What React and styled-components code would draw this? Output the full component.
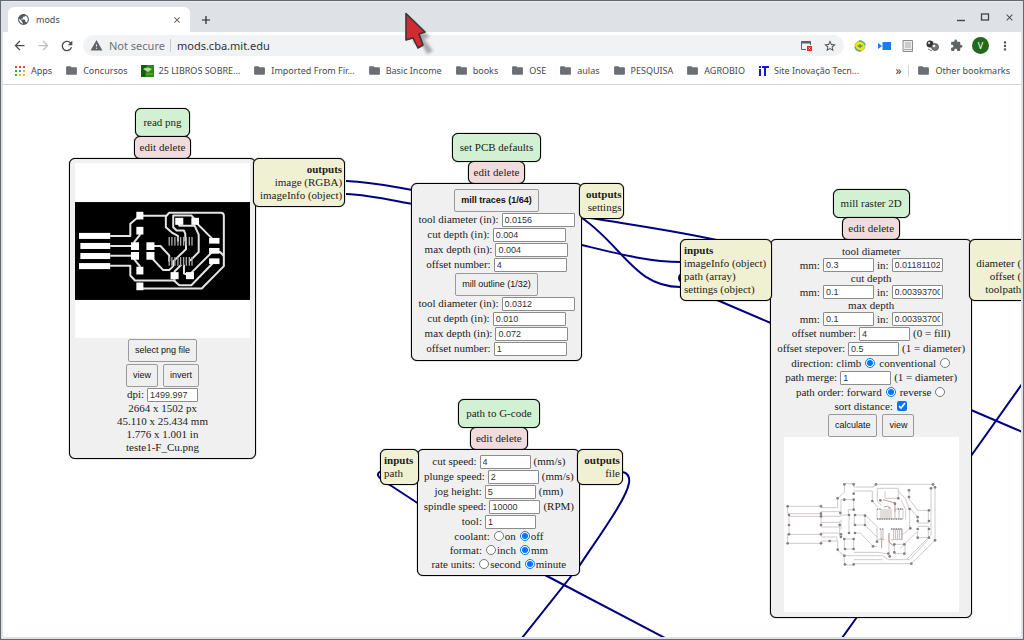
import React, { useId } from "react";
import styled, { createGlobalStyle } from "styled-components";
import {
  MdArrowBack,
  MdArrowForward,
  MdRefresh,
  MdWarning,
  MdFolder,
  MdStarBorder,
  MdExtension,
  MdMoreVert,
  MdClose,
  MdAdd,
  MdPublic,
} from "react-icons/md";

const GlobalStyle = createGlobalStyle`
  *, *::before, *::after { box-sizing: border-box; }
  body { margin: 0; background: #fff; }
  button, input { font: inherit; color: inherit; margin: 0; }
`;

const uiFont = `"Noto Sans", sans-serif`;
const serif = `"Liberation Serif", "Times New Roman", serif`;
const sans = `"Liberation Sans", Arial, sans-serif`;

/* ---------- browser window ---------- */

const Frame = styled.div`
  min-height: 100vh;
  display: flex;
  flex-direction: column;
  border: 1px solid #66686e;
  padding: 0 2px 2px;
  background: #dee1e6;
  font-family: ${uiFont};
  color: #3c4043;
`;

const TabStrip = styled.div`
  display: flex;
  align-items: stretch;
  height: 31px;
  padding: 0 0 0 5px;
  border-top: 1px solid #e9ebee;
`;

const Tab = styled.div`
  display: flex;
  align-items: center;
  gap: 6px;
  width: 182px;
  margin-top: 5px;
  padding: 0 7px 0 9px;
  border-radius: 6px 6px 0 0;
  background: #fff;
  font-size: 9px;
  color: #45494d;
`;

const TabTitle = styled.span`
  flex: 1;
`;

const IconButton = styled.button`
  display: inline-flex;
  align-items: center;
  justify-content: center;
  flex: none;
  width: ${(p) => p.$w || 24}px;
  height: 20px;
  padding: 0;
  border: 0;
  background: none;
  color: ${(p) => p.$color || "#4a4d51"};
  svg { display: block; }
`;

const NewTab = styled.div`
  display: flex;
  align-items: center;
  padding-top: 5px;
  margin-left: 4px;
`;

const WindowControls = styled.div`
  display: flex;
  align-items: center;
  margin-left: auto;
`;

const Toolbar = styled.div`
  display: flex;
  align-items: center;
  height: 27px;
  padding: 0 4px 0 4px;
  background: #fff;
`;

const AddressBar = styled.form`
  display: flex;
  align-items: center;
  flex: 1;
  height: 21px;
  margin: 0 4px;
  padding: 0 2px 0 7px;
  border-radius: 11px;
  background: #f1f2f3;
  font-size: 11px;
`;

const SecurityNote = styled.span`
  display: flex;
  align-items: center;
  gap: 6px;
  padding-right: 5px;
  border-right: 1px solid #c8cacd;
  line-height: 13px;
  color: #6d7175;
`;

const UrlInput = styled.input`
  flex: 1;
  min-width: 0;
  padding: 0 0 0 6px;
  border: 0;
  outline: 0;
  background: none;
  color: #303337;
`;

const Avatar = styled.button`
  flex: none;
  width: 17px;
  height: 17px;
  margin: 0 4px;
  padding: 0;
  border: 0;
  border-radius: 50%;
  background: #22691c;
  color: #fff;
  font-size: 9px;
  line-height: 17px;
`;

const BookmarkBar = styled.nav`
  display: flex;
  align-items: center;
  gap: 13px;
  height: 26px;
  padding: 0 11px 2px 11px;
  border-bottom: 1px solid #d3d5d8;
  background: #fff;
  font-size: 9px;
  white-space: nowrap;
`;

const Bookmark = styled.a`
  display: flex;
  align-items: center;
  gap: 5px;
  color: #45494d;
  text-decoration: none;
  svg { flex: none; }
`;

const BookmarkOverflow = styled.div`
  display: flex;
  align-items: center;
  gap: 4px;
  margin-left: auto;
`;

const MoreButton = styled.button`
  padding: 0 3px 0 0;
  border: 0;
  background: none;
  font-size: 12px;
  line-height: 14px;
`;

const Divider = styled.span`
  width: 1px;
  height: 12px;
  margin-right: 4px;
  background: #d3d5d8;
`;

/* ---------- node canvas ---------- */

const Canvas = styled.main`
  position: relative;
  flex: 1;
  overflow: hidden;
  background: #fff;
  font-family: ${serif};
  font-size: 11px;
  line-height: 13px;
  color: #1c1c1c;
`;

const Wires = styled.svg`
  position: absolute;
  inset: 0;
  width: 100%;
  height: 100%;
  fill: none;
  stroke: #000080;
  stroke-width: 2;
`;

const NodeBox = styled.section`
  position: absolute;
  left: ${(p) => p.$x}px;
  top: ${(p) => p.$y}px;
  display: grid;
  grid-template-columns: auto ${(p) => p.$width}px auto;
  justify-items: center;
  align-items: start;
`;

const Outlined = styled.div`
  border: 1px solid #000;
  box-shadow: 0 0 1px #000;
  border-radius: 6px;
  white-space: nowrap;
`;

const NodeTitle = styled(Outlined).attrs({ as: "h2" })`
  grid-column: 2;
  margin: 0;
  padding: 7px;
  background: #d2f0d2;
  font-size: 11px;
  font-weight: 400;
`;

const NodeActions = styled(Outlined)`
  grid-column: 2;
  display: flex;
  gap: 3px;
  height: 23px;
  margin-top: -1px;
  margin-bottom: -1px;
  padding: 0 5px;
  background: #f0dcdc;
`;

const TextButton = styled.button`
  padding: 0;
  border: 0;
  background: none;
`;

const NodeBody = styled(Outlined)`
  grid-column: 2;
  grid-row: 3;
  justify-self: stretch;
  display: flex;
  flex-direction: column;
  align-items: center;
  padding: ${(p) => p.$pad || 4}px 4px;
  background: #f0f0f0;
`;

const Ports = styled(Outlined)`
  position: relative;
  grid-row: 3;
  grid-column: ${(p) => (p.$side === "in" ? 1 : 3)};
  margin: ${(p) => (p.$side === "in" ? "0 -2px 0 0" : "0 0 0 -3px")};
  padding: ${(p) => (p.$side === "in" ? "4px 5px 4px 3px" : "4px 2px 4px 6px")};
  text-align: ${(p) => (p.$side === "in" ? "left" : "right")};
  background: #f0f0d2;
`;

const PortsHeading = styled.h3`
  margin: 0;
  font-size: 11px;
  font-weight: 700;
`;

const PortList = styled.ul`
  margin: 0;
  padding: 0;
  list-style: none;
`;

const Row = styled.div`
  display: flex;
  align-items: center;
  justify-content: center;
  gap: 3px;
  height: ${(p) => p.$h || 15}px;
`;

const ButtonRow = styled.div`
  display: flex;
  justify-content: center;
  gap: 5px;
  padding-top: 1px;

  & + & {
    padding-top: 2px;
  }
`;

const PushButton = styled.button`
  height: 23px;
  padding: 0 6px;
  border: 1px solid #9a9a9a;
  border-radius: 2px;
  background: #efefef;
  font-family: ${sans};
  font-size: 9px;
  font-weight: ${(p) => (p.$bold ? 700 : 400)};
  color: #111;
`;

const ValueInput = styled.input`
  width: ${(p) => p.$w || 51}px;
  height: 14px;
  padding: 0 2px;
  border: 1px solid #8c8c8c;
  border-radius: 1px;
  background: #fff;
  font-family: ${sans};
  font-size: 9px;
  color: #333;
`;

const Tick = styled.input`
  width: 10px;
  height: 10px;
  margin: 0 1px;
`;

const Choice = styled.label`
  display: flex;
  align-items: center;
  gap: ${(p) => p.$gap || 0}px;
`;

const Preview = styled.div`
  display: flex;
  align-items: center;
  width: 175px;
  height: 175px;
  background: #fff;
`;

const Pointer = styled.svg`
  position: absolute;
  left: 400px;
  top: 8px;
  pointer-events: none;
`;

/* ---------- composed parts ---------- */

function Field({ label, value, unit, w, h }) {
  const id = useId();
  return (
    <Row $h={h}>
      <label htmlFor={id}>{label}</label>
      <ValueInput id={id} $w={w} defaultValue={value} />
      {unit && <span>{unit}</span>}
    </Row>
  );
}

function MmInch({ title, mm, inch }) {
  const id = useId();
  return (
    <>
      <div>{title}</div>
      <Row $h={14}>
        <label htmlFor={id + "mm"}>mm:</label>
        <ValueInput id={id + "mm"} defaultValue={mm} />
        <label htmlFor={id + "in"}>in:</label>
        <ValueInput id={id + "in"} defaultValue={inch} />
      </Row>
    </>
  );
}

function RadioRow({ label, options, checked, labelFirst }) {
  const name = useId();
  return (
    <Row $h={14} role="radiogroup" aria-label={label}>
      <span>{label}</span>
      {options.map((o) => (
        <Choice key={o} $gap={labelFirst ? 3 : 0}>
          {labelFirst && o}
          <Tick type="radio" name={name} defaultChecked={o === checked} />
          {!labelFirst && o}
        </Choice>
      ))}
    </Row>
  );
}

function PortPanel({ side, items }) {
  return (
    <Ports $side={side}>
      <PortsHeading>{side === "in" ? "inputs" : "outputs"}</PortsHeading>
      <PortList>
        {items.map((t) => (
          <li key={t}>{t}</li>
        ))}
      </PortList>
    </Ports>
  );
}

function Node({ title, x, y, width, pad, inputs, outputs, children }) {
  return (
    <NodeBox $x={x} $y={y} $width={width}>
      <NodeTitle>{title}</NodeTitle>
      <NodeActions>
        <TextButton>edit</TextButton>
        <TextButton>delete</TextButton>
      </NodeActions>
      <NodeBody $pad={pad}>{children}</NodeBody>
      {inputs && <PortPanel side="in" items={inputs} />}
      {outputs && <PortPanel side="out" items={outputs} />}
    </NodeBox>
  );
}

const pads = [
  [57, 399, 93, 18], [61, 429, 89, 18], [61, 459, 89, 18], [57, 489, 93, 18],
  [228, 336, 21, 23], [228, 381, 21, 23], [212, 427, 24, 23], [212, 456, 24, 23],
  [258, 427, 24, 23], [258, 456, 24, 23], [228, 500, 21, 23], [228, 547, 21, 23],
  [344, 354, 24, 21], [392, 354, 23, 21], [445, 414, 31, 17], [445, 444, 31, 17],
  [445, 475, 31, 17], [330, 516, 24, 21], [376, 516, 24, 21],
];
const pins = [326, 334, 343, 352, 360, 369, 377, 386, 394];

function BoardImage() {
  return (
    <svg width="175" height="98" viewBox="45 307 522 292" role="img" aria-label="board traces">
      <rect x="45" y="307" width="522" height="292" fill="#000" />
      <g fill="none" stroke="#e4e4e4" strokeWidth="6" strokeLinejoin="round">
        <path d="M150 408H210V372L238 348H318" />
        <path d="M238 392V406L222 426V438H150M150 467H222V478L238 498V512" />
        <path d="M150 497H210V526L224 541H340L356 555H392L460 485" />
        <path d="M238 565H423L489 498V348Q489 339 480 339H326L316 350V382L334 398L352 408V425" />
        <path d="M268 438H300L326 466V484M268 467L308 510H326L338 498V484L376 448V425" />
        <path d="M402 364L460 422M402 358L392 347H338V382L348 392H370L374 402V425" />
        <path d="M356 364V378H402L414 404V456L388 482" />
        <path d="M342 526V514L362 494M388 526L370 520V494M388 522L454 456H478L489 468" />
        <path d="M342 537V545" />
      </g>
      <g fill="#fff">
        {pads.map(([x, y, w, h]) => (
          <rect key={`${x}-${y}`} x={x} y={y} width={w} height={h} />
        ))}
      </g>
      <g fill="#aaa">
        {pins.map((x) => (
          <React.Fragment key={x}>
            <rect x={x - 2} y="411" width="4" height="26" />
            <rect x={x - 2} y="471" width="4" height="26" />
          </React.Fragment>
        ))}
      </g>
    </svg>
  );
}

const outlines = [
  "M80 260H180V264H230V236L250 218V192H278V202H334L345 194H516L522 203V362L451 432H278V436H250V408L230 392V364H180V371H80V344H180V340H236V350",
  "M80 260V282H180V276H240V240H278V270H262V286H238V290H84V344",
  "M180 290V322H236M180 308H236V340M180 352H228V364",
  "M278 214H334V245L350 262M345 194L334 204M349 206H412V236H372V214M349 206V244L362 258",
  "M280 286H312L348 320V336M280 286V316H312V292M312 316L348 352M280 340H298L336 380H350",
  "M250 358H278V388H250ZM250 408H364L382 420H446L500 362",
  "M278 420H364M278 398H350L378 402M412 214L434 238L446 270V326L424 346",
  "M444 212V238L470 272H502V310H470V292L440 258M510 206V346L436 420",
  "M470 320H502V354H470V334L416 388M400 374H432V402H400ZM384 340V402",
  "M348 268V298H398M402 268H426V298H402M348 328V360H372M390 328H424V360H390",
  "M264 286V340M240 300V330M434 300V270L420 240",
];
const joints = [
  [80, 260], [180, 260], [80, 371], [180, 371], [84, 286], [84, 316], [84, 344], [180, 282],
  [180, 290], [180, 316], [180, 344], [250, 194], [278, 194], [278, 222], [250, 240], [278, 240],
  [278, 270], [238, 280], [236, 316], [240, 344], [240, 352], [264, 286], [264, 340], [282, 286],
  [282, 316], [312, 288], [312, 316], [282, 340], [250, 358], [278, 358], [252, 388], [278, 388],
  [250, 408], [252, 434], [278, 434], [230, 236], [230, 390], [345, 194], [516, 194], [522, 203],
  [522, 362], [451, 432], [444, 212], [444, 232], [470, 292], [470, 304], [504, 272], [504, 304],
  [470, 328], [504, 328], [470, 354], [504, 354], [400, 374], [430, 374], [382, 402], [400, 398],
  [386, 410], [430, 402], [334, 244], [358, 242], [402, 252], [412, 236], [446, 268], [448, 326],
  [336, 380], [348, 366], [510, 206], [206, 364],
];

function ToolpathImage() {
  return (
    <svg width="175" height="175" viewBox="69 52 525 525" role="img" aria-label="calculated toolpath">
      <g fill="none" stroke="#d0cbcb" strokeWidth="3">
        {outlines.map((d) => (
          <path key={d} d={d} />
        ))}
      </g>
      <g fill="none" stroke="#5c5050" strokeWidth="3" strokeDasharray="4 3">
        <path d="M348 298H426M348 268H362M410 268H426" />
        <path d="M390 328H424M356 328H370" />
      </g>
      <g fill="none" stroke="#a39a9a" strokeWidth="2">
        <path d="M360 268V298M366 268V298M372 268V298M378 268V298M384 262V298M390 268V298M402 268V298M414 268V298" />
        <path d="M398 328V360M404 328V360M410 328V360M416 328V360M422 328V360M360 328V360M366 328V360" />
      </g>
      <path d="M368 262Q380 256 390 266M366 240L402 250V276M362 386V354M384 340V368L400 380" fill="none" stroke="#b99a9a" strokeWidth="3" />
      <g fill="#857e7e">
        {joints.map(([x, y]) => (
          <circle key={`${x}-${y}`} cx={x} cy={y} r="4" />
        ))}
      </g>
    </svg>
  );
}

const wires = [
  "M343 96C370 97 392 102 410 105",
  "M343 109C368 110 392 116 410 119",
  "M588 133C630 140 680 147 718 156",
  "M579 160C612 168 645 177 679 177",
  "M579 133C620 161 632 203 679 202",
  "M682 188C674 189 674 197 682 198M714 215L770 239",
  "M968 325L1024 349",
  "M1024 292L968 371M854 532L839 553",
  "M380 386C372 387 373 393 387 400L416 419M542 490L662 553",
  "M620 387C630 390 628 401 614 424C600 447 586 466 577 480L519 553",
];

const dots = ["#e94335", "#e94335", "#e94335", "#34a853", "#4285f4", "#fbbc05", "#34a853", "#fbbc05", "#fbbc05"];

const folder = <MdFolder size={13} color="#6b6f73" />;
const bookmarks = [
  {
    label: "Apps",
    icon: (
      <svg width="12" height="12" viewBox="0 0 12 12">
        {dots.map((c, i) => (
          <rect key={i} x={1 + (i % 3) * 4} y={1 + Math.floor(i / 3) * 4} width="2" height="2" fill={c} />
        ))}
      </svg>
    ),
  },
  { label: "Concursos", icon: folder },
  {
    label: "25 LIBROS SOBRE...",
    icon: (
      <svg width="13" height="13" viewBox="0 0 13 13">
        <rect y="1" width="13" height="12" fill="#2f8424" />
        <path d="M0 1H6L4 13H0Z" fill="#165a14" />
        <path d="M2 5Q6 2 11 5L7 8Z" fill="#b7dd91" />
        <path d="M5 10H12" stroke="#76b83a" />
      </svg>
    ),
  },
  { label: "Imported From Fir...", icon: folder },
  { label: "Basic Income", icon: folder },
  { label: "books", icon: folder },
  { label: "OSE", icon: folder },
  { label: "aulas", icon: folder },
  { label: "PESQUISA", icon: folder },
  { label: "AGROBIO", icon: folder },
  {
    label: "Site Inovação Tecn...",
    icon: (
      <svg width="11" height="10" viewBox="0 0 11 10" fill="#1414e0">
        <path d="M1 0H3V2H1ZM1 3H3V10H1ZM4 0H11V2H8V10H6V2H4Z" />
      </svg>
    ),
  },
];

function BrowserChrome() {
  return (
    <header>
      <TabStrip>
        <Tab>
          <MdPublic size={13} color="#55595e" />
          <TabTitle>mods</TabTitle>
          <IconButton $w={12} aria-label="Close tab"><MdClose size={10} /></IconButton>
        </Tab>
        <NewTab>
          <IconButton aria-label="New tab"><MdAdd size={14} color="#222" /></IconButton>
        </NewTab>
        <WindowControls>
          <IconButton aria-label="Minimize">
            <svg width="10" height="10" viewBox="0 0 10 10"><path d="M1 8.5H9" stroke="#444" strokeWidth="1.4" /></svg>
          </IconButton>
          <IconButton aria-label="Maximize">
            <svg width="10" height="10" viewBox="0 0 10 10"><rect x="1.5" y="2" width="7" height="6" fill="none" stroke="#444" strokeWidth="1.3" /></svg>
          </IconButton>
          <IconButton aria-label="Close window"><MdClose size={11} /></IconButton>
        </WindowControls>
      </TabStrip>
      <Toolbar>
        <IconButton aria-label="Back"><MdArrowBack size={15} /></IconButton>
        <IconButton aria-label="Forward" $color="#babcbf"><MdArrowForward size={15} /></IconButton>
        <IconButton aria-label="Reload"><MdRefresh size={16} /></IconButton>
        <AddressBar>
          <SecurityNote>
            <MdWarning size={13} color="#5f6368" />
            Not secure
          </SecurityNote>
          <UrlInput aria-label="Address" defaultValue="mods.cba.mit.edu" />
          <IconButton type="button" aria-label="Popup blocked">
            <svg width="13" height="12" viewBox="0 0 13 12">
              <path d="M6 9.5H1.5V1.5H10.5V5" fill="none" stroke="#5f6368" />
              <path d="M1 2.5H11" stroke="#5f6368" strokeWidth="2" />
              <rect x="7" y="6" width="5" height="5" fill="#d93025" />
              <path d="M8.5 7.5L10.5 9.5M10.5 7.5L8.5 9.5" stroke="#fff" strokeWidth=".7" />
            </svg>
          </IconButton>
          <IconButton type="button" aria-label="Bookmark this page"><MdStarBorder size={14} /></IconButton>
        </AddressBar>
        <IconButton aria-label="Sync extension">
          <svg width="12" height="12" viewBox="0 0 12 12">
            <circle cx="6" cy="6" r="5" fill="#f1e60e" stroke="#b9cf2c" />
            <path d="M1 7Q2 11 7 11M5 1Q10 1 11 5" fill="none" stroke="#5aa992" strokeWidth="1.4" />
            <path d="M3.500 6H8.500M6 4V8" stroke="#4f9a46" strokeWidth="1.3" />
          </svg>
        </IconButton>
        <IconButton aria-label="Video extension">
          <svg width="13" height="10" viewBox="0 0 13 10" fill="#1a7cf2"><path d="M0 2L4 5L0 8ZM4.500 1H13V9H4.500Z" /></svg>
        </IconButton>
        <IconButton aria-label="Page extension">
          <svg width="12" height="12" viewBox="0 0 12 12">
            <path d="M1 .5H10.500V11.500H1Z" fill="#ededed" stroke="#8c8c8c" />
            <path d="M3 3H9M3 5H9M3 7H9M2 9.500H10" stroke="#999" strokeWidth=".8" />
          </svg>
        </IconButton>
        <IconButton aria-label="Spheres extension">
          <svg width="13" height="12" viewBox="0 0 13 12">
            <circle cx="4" cy="4" r="3.500" fill="#333" />
            <circle cx="9" cy="7" r="3.500" fill="#777" stroke="#444" strokeWidth=".7" />
            <circle cx="3" cy="3" r="1.200" fill="#ccc" />
            <circle cx="8" cy="6" r="1.300" fill="#f2f2f2" />
            <path d="M2 9L6 11" stroke="#777" />
          </svg>
        </IconButton>
        <IconButton aria-label="Extensions" $color="#5f6368"><MdExtension size={13} /></IconButton>
        <Avatar aria-label="Profile V">V</Avatar>
        <IconButton aria-label="Menu"><MdMoreVert size={14} /></IconButton>
      </Toolbar>
      <BookmarkBar aria-label="Bookmarks">
        {bookmarks.map((b) => (
          <Bookmark key={b.label} href="#">
            {b.icon}
            {b.label}
          </Bookmark>
        ))}
        <BookmarkOverflow>
          <MoreButton aria-label="More bookmarks">»</MoreButton>
          <Divider />
          <Bookmark href="#">
            {folder}
            Other bookmarks
          </Bookmark>
        </BookmarkOverflow>
      </BookmarkBar>
    </header>
  );
}

export default function App() {
  const sortId = useId();
  return (
    <Frame>
      <GlobalStyle />
      <BrowserChrome />
      <Canvas>
        <Wires aria-hidden="true">
          {wires.map((d) => (
            <path key={d} d={d} />
          ))}
        </Wires>

        <Node title="read png" x={66} y={23} width={187} outputs={["image (RGBA)", "imageInfo (object)"]}>
          <Preview><BoardImage /></Preview>
          <ButtonRow><PushButton>select png file</PushButton></ButtonRow>
          <ButtonRow>
            <PushButton>view</PushButton>
            <PushButton>invert</PushButton>
          </ButtonRow>
          <Field label="dpi:" value="1499.997" />
          <div>2664 x 1502 px</div>
          <div>45.110 x 25.434 mm</div>
          <div>1.776 x 1.001 in</div>
          <div>teste1-F_Cu.png</div>
        </Node>

        <Node title="set PCB defaults" x={408} y={48} width={171} outputs={["settings"]}>
          <ButtonRow><PushButton $bold>mill traces (1/64)</PushButton></ButtonRow>
          <Field label="tool diameter (in):" value="0.0156" w={73} />
          <Field label="cut depth (in):" value="0.004" w={73} />
          <Field label="max depth (in):" value="0.004" w={73} />
          <Field label="offset number:" value="4" w={73} />
          <ButtonRow><PushButton>mill outline (1/32)</PushButton></ButtonRow>
          <Field label="tool diameter (in):" value="0.0312" w={73} />
          <Field label="cut depth (in):" value="0.010" w={73} />
          <Field label="max depth (in):" value="0.072" w={73} />
          <Field label="offset number:" value="1" w={73} />
        </Node>

        <Node title="path to G-code" x={377} y={314} width={163} inputs={["path"]} outputs={["file"]}>
          <Field label="cut speed:" value="4" unit="(mm/s)" />
          <Field label="plunge speed:" value="2" unit="(mm/s)" />
          <Field label="jog height:" value="5" unit="(mm)" />
          <Field label="spindle speed:" value="10000" unit="(RPM)" />
          <Field label="tool:" value="1" />
          <RadioRow label="coolant:" options={["on", "off"]} checked="off" />
          <RadioRow label="format:" options={["inch", "mm"]} checked="mm" />
          <RadioRow label="rate units:" options={["second", "minute"]} checked="minute" />
        </Node>

        <Node
          title="mill raster 2D"
          x={677}
          y={104}
          width={202}
          pad={5}
          inputs={["imageInfo (object)", "path (array)", "settings (object)"]}
          outputs={["diameter (number)", "offset (number)", "toolpath (object)"]}
        >
          <MmInch title="tool diameter" mm="0.3" inch="0.01181102362204" />
          <MmInch title="cut depth" mm="0.1" inch="0.00393700787401" />
          <MmInch title="max depth" mm="0.1" inch="0.00393700787401" />
          <Field label="offset number:" value="4" unit="(0 = fill)" />
          <Field label="offset stepover:" value="0.5" unit="(1 = diameter)" />
          <RadioRow label="direction:" options={["climb", "conventional"]} checked="climb" labelFirst />
          <Field label="path merge:" value="1" unit="(1 = diameter)" />
          <RadioRow label="path order:" options={["forward", "reverse"]} checked="forward" labelFirst />
          <Row $h={14}>
            <label htmlFor={sortId}>sort distance:</label>
            <Tick id={sortId} type="checkbox" defaultChecked />
          </Row>
          <ButtonRow>
            <PushButton>calculate</PushButton>
            <PushButton>view</PushButton>
          </ButtonRow>
          <Preview><ToolpathImage /></Preview>
        </Node>
      </Canvas>
      <Pointer width="42" height="50" viewBox="400 8 42 50" aria-hidden="true">
        <defs>
          <filter id="soft"><feGaussianBlur stdDeviation="1.5" /></filter>
        </defs>
        <path d="M412 20L430 37L424 39L433 51L427 54L421 42L414 44Z" fill="#000" opacity=".3" filter="url(#soft)" />
        <path d="M406 13.500L425 32L419 34L423 45L418 48L413 38L406 40Z" fill="#d02b33" stroke="#3b3336" strokeWidth="1.600" strokeLinejoin="round" />
      </Pointer>
    </Frame>
  );
}
